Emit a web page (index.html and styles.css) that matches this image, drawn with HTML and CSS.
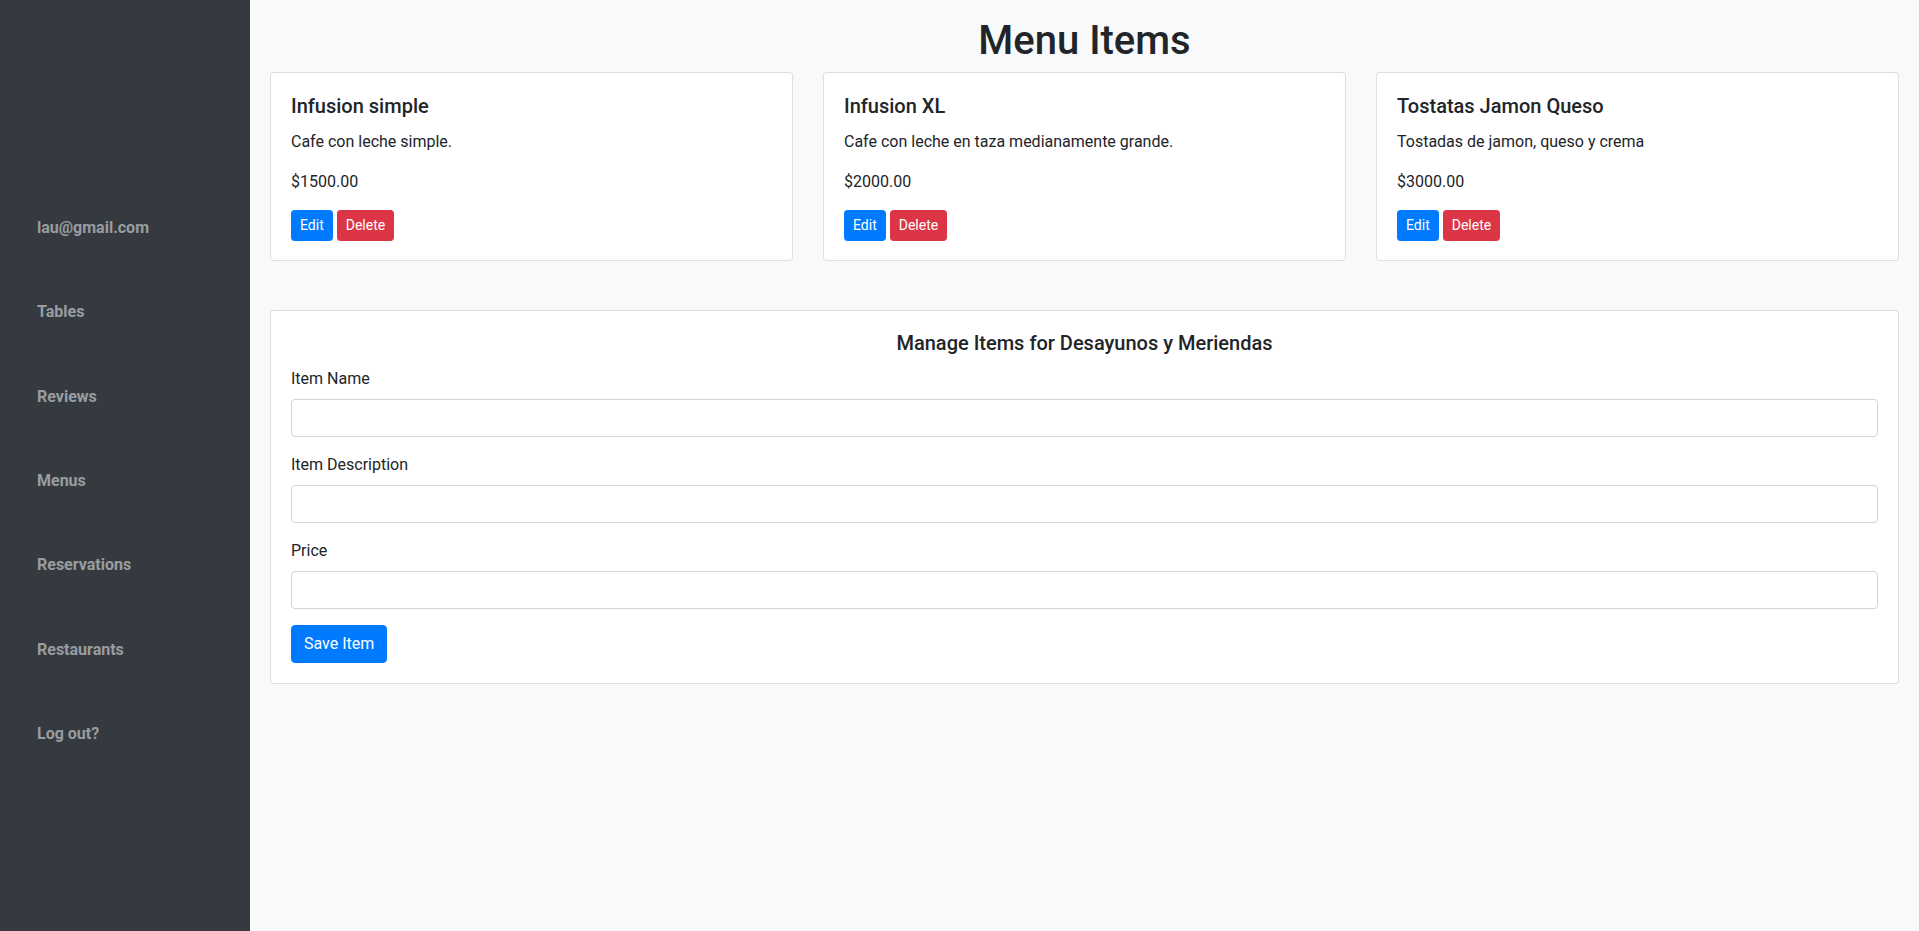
FILE: index.html
```html
<!DOCTYPE html>
<html lang="es">
<head>
<meta charset="utf-8">
<title>Menu Items</title>
<link rel="stylesheet" href="styles.css">
</head>
<body>
<aside class="sidebar">
  <nav class="nav">
    <a class="nav-link" href="#">lau@gmail.com</a>
    <a class="nav-link" href="#">Tables</a>
    <a class="nav-link" href="#">Reviews</a>
    <a class="nav-link" href="#">Menus</a>
    <a class="nav-link" href="#">Reservations</a>
    <a class="nav-link" href="#">Restaurants</a>
    <a class="nav-link" href="#">Log out?</a>
  </nav>
</aside>
<main class="main">
  <h1 class="page-title">Menu Items</h1>
  <div class="card-grid">
    <div class="card item-card">
      <h5 class="card-title">Infusion simple</h5>
      <p class="card-text">Cafe con leche simple.</p>
      <p class="card-text">$1500.00</p>
      <div class="actions">
        <button class="btn btn-sm btn-primary">Edit</button>
        <button class="btn btn-sm btn-danger">Delete</button>
      </div>
    </div>
    <div class="card item-card">
      <h5 class="card-title">Infusion XL</h5>
      <p class="card-text">Cafe con leche en taza medianamente grande.</p>
      <p class="card-text">$2000.00</p>
      <div class="actions">
        <button class="btn btn-sm btn-primary">Edit</button>
        <button class="btn btn-sm btn-danger">Delete</button>
      </div>
    </div>
    <div class="card item-card">
      <h5 class="card-title">Tostatas Jamon Queso</h5>
      <p class="card-text">Tostadas de jamon, queso y crema</p>
      <p class="card-text">$3000.00</p>
      <div class="actions">
        <button class="btn btn-sm btn-primary">Edit</button>
        <button class="btn btn-sm btn-danger">Delete</button>
      </div>
    </div>
  </div>
  <div class="card form-card">
    <h5 class="card-title centered">Manage Items for Desayunos y Meriendas</h5>
    <form class="item-form">
      <div class="form-group">
        <label class="form-label">Item Name</label>
        <input class="form-control" type="text">
      </div>
      <div class="form-group">
        <label class="form-label">Item Description</label>
        <input class="form-control" type="text">
      </div>
      <div class="form-group">
        <label class="form-label">Price</label>
        <input class="form-control" type="text">
      </div>
      <div><button type="button" class="btn btn-primary">Save Item</button></div>
    </form>
  </div>
</main>
</body>
</html>
```
FILE: styles.css
```css
* { box-sizing: border-box; }
html, body { height: 100%; }
body {
  margin: 0;
  display: flex;
  font-family: "Segoe UI", Roboto, "Liberation Sans", sans-serif;
  font-size: 16px;
  line-height: 1.5;
  color: #212529;
  background: #f8f9fa;
}
.sidebar {
  width: 250px;
  flex: 0 0 250px;
  min-height: 100vh;
  background: #343a40;
}
.nav {
  display: grid;
  grid-auto-rows: 84.33px;
  padding-top: 186px;
}
.nav-link {
  display: flex;
  align-items: center;
  padding-left: 37px;
  color: rgba(255,255,255,.5);
  font-weight: 700;
  text-decoration: none;
  font-size: 16px;
}
.main {
  flex: 1;
  padding: 0 20px;
}
.page-title {
  margin: 17px 0 7px;
  font-size: 40px;
  line-height: 48px;
  font-weight: 500;
  text-align: center;
}
.card-grid {
  display: grid;
  grid-template-columns: repeat(3, 1fr);
  column-gap: 30px;
}
.card {
  background: #fff;
  border: 1px solid rgba(0,0,0,.125);
  border-radius: 4px;
  padding: 20px;
}
.item-card { padding: 21px 20px 19px; }
.card-title {
  margin: 0 0 12px;
  font-size: 20px;
  line-height: 24px;
  font-weight: 500;
}
.centered { text-align: center; }
.card-text { margin: 0 0 16px; }
.actions { display: flex; gap: 4px; }
.btn {
  border: 1px solid transparent;
  font-family: inherit;
  color: #fff;
  font-size: 16px;
  line-height: 24px;
  padding: 6px 12px;
  border-radius: 4px;
  cursor: pointer;
}
.btn-sm {
  font-size: 14px;
  line-height: 21px;
  padding: 4px 8px;
  border-radius: 3.2px;
}
.btn-primary { background: #007bff; border-color: #007bff; }
.btn-danger { background: #dc3545; border-color: #dc3545; }
.form-card { margin-top: 49px; }
.form-group { margin-bottom: 16px; }
.form-label { display: block; margin-bottom: 8px; }
.form-control {
  display: block;
  width: 100%;
  height: 38px;
  padding: 6px 12px;
  font: inherit;
  border: 1px solid #ced4da;
  border-radius: 4px;
  background: #fff;
}
```
